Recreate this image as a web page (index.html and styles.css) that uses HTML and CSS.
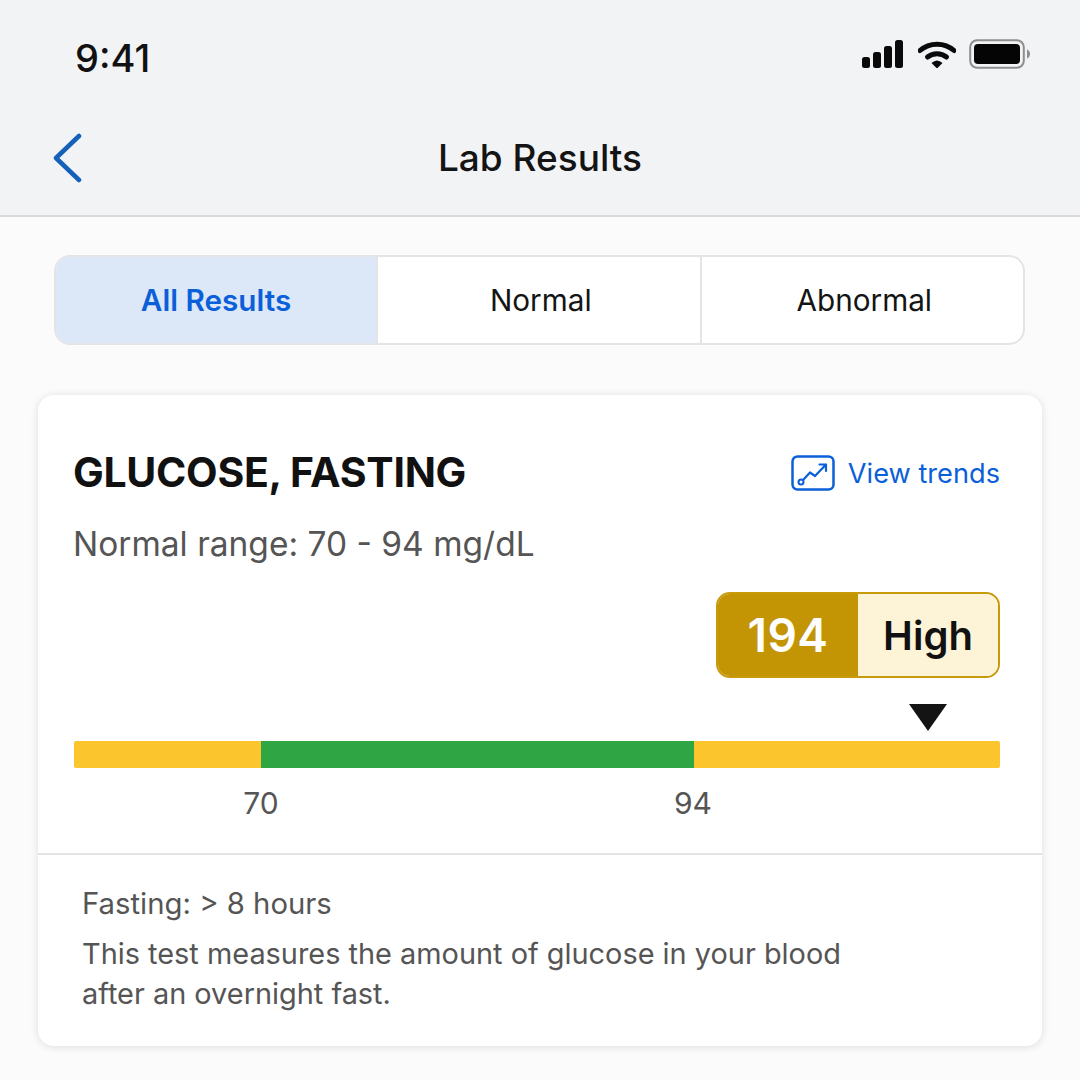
FILE: index.html
```html
<!DOCTYPE html>
<html lang="en">
<head>
<meta charset="utf-8">
<title>Lab Results</title>
<link rel="stylesheet" href="styles.css">
</head>
<body>
<header class="top">
  <div class="status">
    <span class="time">9:41</span>
    <div class="status-icons">
      <svg class="sig" width="44" height="28" viewBox="0 0 44 28"><rect x="1" y="17" width="8" height="11" rx="2.500"/><rect x="12" y="12" width="8" height="16" rx="2.500"/><rect x="23" y="6" width="8" height="22" rx="2.500"/><rect x="34" y="0" width="8" height="28" rx="2.500"/></svg>
      <svg class="wifi" width="38" height="28" viewBox="0 0 38 28"><path d="M2 10.500C11.500 2 26.500 2 36 10.500" fill="none" stroke="#0a0a0a" stroke-width="5" stroke-linecap="round"/><path d="M9.500 17C15 12.500 23 12.500 28.500 17" fill="none" stroke="#0a0a0a" stroke-width="5" stroke-linecap="round"/><path d="M13.500 23Q19 18 24.500 23L19 28.500Z" fill="#0a0a0a"/></svg>
      <svg class="batt" width="62" height="30" viewBox="0 0 62 30"><rect x="1.200" y="1.200" width="53.600" height="27.600" rx="7" fill="none" stroke="#8e8e8e" stroke-width="2"/><rect x="5" y="5" width="46" height="20" rx="4" fill="#050505"/><path d="M58 10.500C60 11 61 13 61 15S60 19 58 19.500Z" fill="#8e8e8e"/></svg>
    </div>
  </div>
  <nav class="nav">
    <svg class="back" width="30" height="50" viewBox="0 0 30 50"><path d="M26 3 3 25l23 22" fill="none" stroke="#1560b8" stroke-width="4.500" stroke-linecap="round" stroke-linejoin="round"/></svg>
    <h1 class="title">Lab Results</h1>
  </nav>
</header>
<main class="content">
  <div class="tabs">
    <div class="tab tab-active">All Results</div>
    <div class="tab">Normal</div>
    <div class="tab">Abnormal</div>
  </div>
  <section class="card">
    <div class="card-main">
      <div class="card-head">
        <h2 class="test-name">GLUCOSE, FASTING</h2>
        <a class="trends">
          <svg width="44" height="36" viewBox="0 0 44 36"><rect x="1.500" y="1.500" width="41" height="33" rx="5" fill="none" stroke="#0b5fd8" stroke-width="2.500"/><path d="M12.500 24.500 19 17.500l5 3.500 11-11.500M28.500 9.500h6.500V16" fill="none" stroke="#0b5fd8" stroke-width="2.200" stroke-linecap="round" stroke-linejoin="round"/><circle cx="10" cy="27" r="2.500" fill="none" stroke="#0b5fd8" stroke-width="2"/></svg>
          <span>View trends</span>
        </a>
      </div>
      <p class="range">Normal range: 70 - 94 mg/dL</p>
      <div class="badge-row">
        <div class="badge"><span class="badge-val">194</span><span class="badge-label">High</span></div>
      </div>
      <div class="marker-row"><span class="marker"></span></div>
      <div class="bar">
        <span class="seg seg-low"></span>
        <span class="seg seg-ok"></span>
        <span class="seg seg-high"></span>
      </div>
      <div class="ticks">
        <span class="tick tick-70">70</span>
        <span class="tick tick-94">94</span>
      </div>
    </div>
    <div class="card-foot">
      <p class="fast">Fasting: &gt; 8 hours</p>
      <p class="desc">This test measures the amount of glucose in your blood<br>after an overnight fast.</p>
    </div>
  </section>
</main>
</body>
</html>
```
FILE: styles.css
```css
* { box-sizing: border-box; }
html, body { margin: 0; padding: 0; }
body {
  width: 1080px;
  height: 1080px;
  overflow: hidden;
  background: #fbfbfb;
  font-family: Inter, "Liberation Sans", sans-serif;
  color: #111;
}
.top {
  height: 217px;
  background: #f2f3f5;
  border-bottom: 2px solid #d9d9dc;
}
.status {
  height: 116px;
  display: flex;
  justify-content: space-between;
  align-items: flex-start;
  padding: 36px 49px 0 75px;
}
.time { font-size: 38px; line-height: 44px; font-weight: 500; color: #111; }
.status-icons { display: flex; align-items: center; gap: 13px; padding-top: 3px; }
.sig { fill: #0a0a0a; }
.nav {
  position: relative;
  height: 84px;
  display: flex;
  align-items: center;
  justify-content: center;
}
.back { position: absolute; left: 53px; top: 17px; }
.title { margin: 0; font-size: 37px; line-height: 44px; font-weight: 500; color: #141414; }
.content { padding: 38px 38px 0; }
.tabs {
  margin: 0 17px 0 16px;
  height: 90px;
  display: grid;
  grid-template-columns: 320px 1fr 1fr;
  background: #fff;
  border: 2px solid #e3e4e6;
  border-radius: 16px;
  overflow: hidden;
}
.tab {
  display: flex;
  align-items: center;
  justify-content: center;
  padding-left: 4px;
  font-size: 29.700px;
  color: #141414;
  border-left: 2px solid #e3e4e6;
}
.tab-active {
  padding-left: 0;
  border-left: 0;
  background: #dce7f8;
  color: #0b5fd8;
  font-weight: 600;
}
.card {
  margin-top: 50px;
  height: 651px;
  background: #fff;
  border-radius: 16px;
  box-shadow: 0 1px 8px rgba(0, 0, 0, .12);
}
.card-main { height: 460px; padding: 0 42px 0 36px; border-bottom: 2px solid #e4e4e6; }
.card-head { height: 115px; display: flex; align-items: center; justify-content: space-between; padding-top: 39px; }
.test-name { margin: 0 0 0 -1px; font-size: 41px; line-height: 46px; font-weight: 700; color: #111; letter-spacing: -.3px; }
.trends { display: flex; align-items: center; gap: 13px; font-size: 27.200px; color: #0b5fd8; position: relative; top: 1px; }
.range { margin: 12px 0 0 -1px; font-size: 33.500px; line-height: 44px; color: #555; }
.badge-row { display: flex; justify-content: flex-end; margin-top: 26px; }
.badge {
  display: flex;
  width: 284px;
  height: 86px;
  border: 2px solid #c89a0a;
  border-radius: 14px;
  overflow: hidden;
}
.badge-val { width: 140px; display: flex; align-items: center; justify-content: center; background: #c39505; color: #fff; font-weight: 600; font-size: 46px; letter-spacing: .5px; }
.badge-label { flex: 1; display: flex; align-items: center; justify-content: center; background: #fdf4d8; color: #111; font-weight: 600; font-size: 40px; }
.marker-row { height: 28px; margin-top: 26px; position: relative; }
.marker {
  position: absolute;
  right: 53px;
  top: 0;
  width: 38px;
  height: 27px;
  background: #141414;
  clip-path: polygon(0 0, 100% 0, 50% 100%);
}
.bar { display: flex; height: 27px; margin-top: 9px; border-radius: 2px; overflow: hidden; }
.seg-low { width: 187px; background: #fbc52e; }
.seg-ok { width: 433px; background: #2fa544; }
.seg-high { flex: 1; background: #fbc52e; }
.ticks { position: relative; height: 40px; margin-top: 15px; font-size: 30px; line-height: 40px; color: #555; }
.tick { position: absolute; top: 0; transform: translateX(-50%); }
.tick-70 { left: 187px; }
.tick-94 { left: 619px; }
.card-foot { padding: 29px 44px 0; font-size: 28.900px; line-height: 40px; color: #555; }
.card-foot p { margin: 0; }
.fast { font-size: 29.300px; }
.card-foot .desc { margin-top: 10px; }
```
